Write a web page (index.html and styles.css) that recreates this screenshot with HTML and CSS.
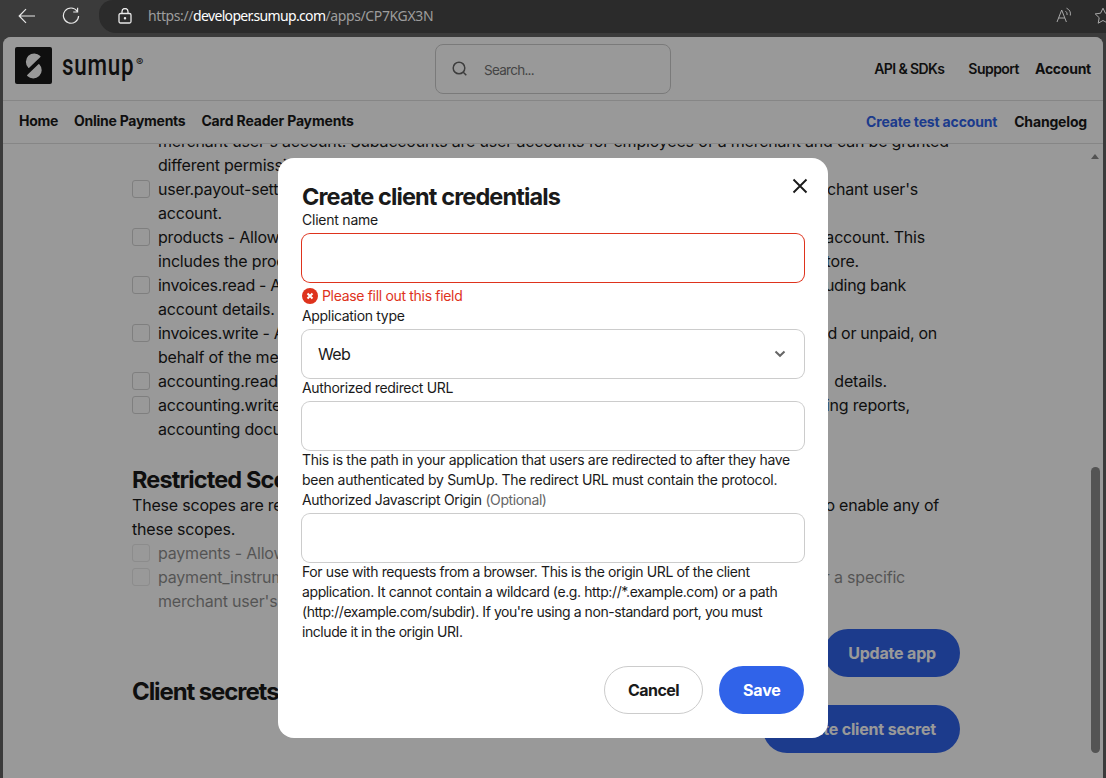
FILE: index.html
```
<!DOCTYPE html>
<html lang="en">
<head>
<meta charset="utf-8">
<title>SumUp Developer</title>
<link rel="stylesheet" href="styles.css">
</head>
<body>
<div class="browser">
  <div class="toolbar">
    <svg class="tool back" viewBox="0 0 18 16"><path d="M17 8H1.5M8 1.2L1.2 8L8 14.8"/></svg>
    <svg class="tool reload" viewBox="0 0 18 18"><path d="M15.2 4.2A7.6 7.6 0 1 0 16.6 9M15.6 .8V5H11.2"/></svg>
    <div class="address">
      <svg class="lock" viewBox="0 0 14 16"><rect x="1" y="5.5" width="12" height="9.5" rx="1.5"/><path d="M4 5.5V3.5a3 3 0 0 1 6 0V5.5"/><circle cx="7" cy="10.2" r=".6"/></svg>
      <div class="url"><span class="scheme">https://</span><span class="host">developer.sumup.com</span><span class="path">/apps/CP7KGX3N</span></div>
      <svg class="aloud" viewBox="0 0 17 16"><path d="M1 15L5.7 3L10.400 15M2.600 11H8.800M9.500 4.200q2 1.200 1.600 3.800M10.500 1.200q4.800 2.200 3.800 7.300"/></svg>
      <svg class="star" viewBox="0 0 18 18"><path d="M9 1.2l2.4 5 5.4.7-4 3.8 1 5.5L9 13.5l-4.8 2.7 1-5.5-4-3.8 5.4-.7z"/></svg>
    </div>
  </div>

  <div class="page">
    <header class="top">
      <div class="logo">
        <svg class="mark" viewBox="0 0 37 37"><rect width="37" height="37" rx="2" class="mark-bg"/><path class="mark-fg" d="M25.300 8.900A8.200 8.200 0 0 0 13.300 20.700Q13.700 21.200 14.200 20.700L25.400 9.900Q25.800 9.400 25.300 8.900zM12.300 29A8.200 8.200 0 0 0 24.300 17.200Q23.900 16.700 23.400 17.200L12.200 28Q11.800 28.500 12.300 29z"/></svg>
        <span class="wordmark">sumup</span>
        <span class="reg">®</span>
      </div>
      <div class="search">
        <svg viewBox="0 0 16 16"><circle cx="7" cy="7" r="5.8"/><path d="M11.300 11.300L14.300 14.300"/></svg>
        <span>Search...</span>
      </div>
      <nav class="top-links"><a class="api">API &amp; SDKs</a><a class="support">Support</a><a class="acct">Account</a></nav>
    </header>
    <nav class="sub">
      <a class="home">Home</a><a class="online">Online Payments</a><a class="reader">Card Reader Payments</a>
      <a class="create">Create test account</a><a>Changelog</a>
    </nav>

    <main class="content">
      <div class="scope first">
        <p class="lead">merchant user's account. Subaccounts are user accounts for employees of a merchant and can be granted</p>
        <p>different permissions.</p>
      </div>
      <div class="scope"><i class="box"></i>
        <p class="w760"><span>user.payout-settings</span><span>merchant user's</span></p><p>account.</p></div>
      <div class="scope"><i class="box"></i>
        <p class="w767"><span>products - Allows</span><span>account. This</span></p><p class="w701"><span>includes the products</span><span>store.</span></p></div>
      <div class="scope"><i class="box"></i>
        <p class="w748 tight"><span>invoices.read - Allows</span><span>including bank</span></p><p>account details.</p></div>
      <div class="scope"><i class="box"></i>
        <p class="w779 tight"><span>invoices.write - Allows</span><span>paid or unpaid, on</span></p><p>behalf of the merchant</p></div>
      <div class="scope"><i class="box"></i>
        <p class="w729"><span>accounting.read</span><span>details.</span></p></div>
      <div class="scope"><i class="box"></i>
        <p class="w752"><span>accounting.write</span><span>accounting reports,</span></p><p>accounting documents.</p></div>

      <h2 class="restricted">Restricted Scopes</h2>
      <p class="w807"><span>These scopes are restricted</span><span>to enable any of</span></p>
      <p>these scopes.</p>
      <div class="scope off"><i class="box"></i><p>payments - Allows</p></div>
      <div class="scope off"><i class="box"></i>
        <p class="w747"><span>payment_instruments</span><span>for a specific</span></p><p>merchant user's</p></div>
      <div class="actions"><button class="btn primary">Update app</button></div>
      <div class="secrets"><h2>Client secrets</h2><button class="btn primary">Create client secret</button></div>
    </main>

    <div class="scrollbar"><i class="arrow"></i><i class="thumb"></i></div>
    <div class="overlay"></div>
  </div>
</div>

<section class="modal" role="dialog">
  <svg class="close" viewBox="0 0 16 16"><path d="M1.500 1.500L14.500 14.500M14.500 1.500L1.500 14.500"/></svg>
  <h2>Create client credentials</h2>
  <label class="l1">Client name</label>
  <div class="field invalid"></div>
  <div class="error"><svg viewBox="0 0 16 16"><circle cx="8" cy="8" r="8"/><path d="M5.500 5.500L10.500 10.500M10.500 5.500L5.500 10.500"/></svg><span>Please fill out this field</span></div>
  <label>Application type</label>
  <div class="field select"><span>Web</span><svg viewBox="0 0 12 8"><path d="M1.500 1.500L6 5.800L10.500 1.500"/></svg></div>
  <label>Authorized redirect URL</label>
  <div class="field"></div>
  <p class="h1">This is the path in your application that users are redirected to after they have</p>
  <p class="h1">been authenticated by SumUp. The redirect URL must contain the protocol.</p>
  <label>Authorized Javascript Origin <span class="optional">(Optional)</span></label>
  <div class="field"></div>
  <p class="h2">For use with requests from a browser. This is the origin URL of the client</p>
  <p class="h2">application. It cannot contain a wildcard (e.g. http://*.example.com) or a path</p>
  <p class="h3">(http://example.com/subdir). If you're using a non-standard port, you must</p>
  <p class="h3">include it in the origin URI.</p>
  <div class="buttons"><button class="btn secondary">Cancel</button><button class="btn primary save">Save</button></div>
</section>
</body>
</html>
```
FILE: styles.css
```
* { box-sizing: border-box; }
body { margin: 0; width: 1106px; height: 778px; overflow: hidden; position: relative; color: #1a1a1a; font: 16px/24px Inter, sans-serif; letter-spacing: -0.2px; }
h2, p { margin: 0; white-space: nowrap; }
h2 { font-size: 23.5px; line-height: 28px; padding-top: 1px; height: 28px; font-weight: 700; letter-spacing: -0.88px; }
svg { fill: none; stroke: currentColor; flex: none; }

.browser { height: 778px; background: #3b3b3b; padding: 0 3px; display: flex; flex-direction: column; }
.toolbar { height: 37px; flex: none; display: flex; color: #e8e8e8; margin-right: -3px; }
.tool { stroke-width: 1.2; }
.back { width: 18px; height: 16px; margin: 8px 0 0 15px; }
.reload { width: 18px; height: 18px; margin: 7px 0 0 26px; }
.address { flex: 1; height: 33px; margin-left: 19px; background: #2b2b2b; border-radius: 14px 0 0 17px; display: flex; padding-left: 19px; overflow: hidden; }
.lock { width: 14px; height: 16px; margin-top: 8px; stroke-width: 1.3; }
.url { margin-left: 16px; font: 14px/32px "Noto Sans", sans-serif; color: #9d9d9d; white-space: nowrap; flex: 1; }
.scheme { letter-spacing: -0.4px; }
.host { color: #fff; letter-spacing: -0.66px; }
.path { letter-spacing: -0.37px; }
.aloud { width: 17px; height: 16px; margin: 7px 21px 0 0; color: #a8a8a8; }
.star { width: 18px; height: 18px; margin: 7px -6px 0 0; color: #a8a8a8; }

.page { position: relative; flex: 1; min-height: 0; background: #fff; border-radius: 8px 8px 0 0; overflow: hidden; display: flex; flex-direction: column; }
.top { height: 64px; flex: none; border-bottom: 1px solid #e0e0e0; display: flex; padding: 0 12px; }
.logo { display: flex; width: 420px; padding-top: 10px; }
.mark { width: 37px; height: 37px; margin-left: .4px; }
.mark-bg { fill: #1a1a1a; stroke: none; }
.mark-fg { fill: #fff; stroke: none; }
.wordmark { font: 500 29.500px/36px Roboto, sans-serif; letter-spacing: 1px; transform: scaleX(.76); transform-origin: 0 0; width: 76px; margin-left: 9.500px; }
.reg { font-size: 11px; line-height: 30px; letter-spacing: 0; margin-left: -2px; font-weight: 500; }
.search { width: 236px; height: 50px; margin-top: 7px; border: 1px solid #ccc; border-radius: 8px; display: flex; padding: 0 16px; align-items: center; }
.search svg { width: 16px; height: 16px; color: #666; stroke-width: 1.5; }
.search span { margin: 2px 0 0 16px; font-size: 13.500px; color: #737373; letter-spacing: -0.73px; }
.top-links { margin-left: auto; display: flex; font-size: 14px; font-weight: 600; line-height: 64px; white-space: nowrap; }
.api { letter-spacing: -0.6px; margin-right: 24px; }
.support { letter-spacing: -0.54px; margin-right: 16px; }
.acct { letter-spacing: -0.25px; font-weight: 700; }
.sub { height: 43px; flex: none; border-bottom: 1px solid #e0e0e0; display: flex; padding: 0 16px; font-size: 14px; font-weight: 700; line-height: 40px; white-space: nowrap; letter-spacing: -0.17px; }
.sub a { margin-right: 16px; }
.sub a:last-child { margin-right: 0; }
.sub .home, .sub .online { letter-spacing: -0.27px; }
.sub .create { margin-left: auto; color: #3063e9; margin-right: 17px; }
.sub .create, .sub .create + a { line-height: 42px; }

.content { flex: 1; min-height: 0; overflow: hidden; padding-left: 129px; width: 957px; }
.scope { position: relative; padding-left: 26px; }
.first { margin-top: -15px; }
.lead { letter-spacing: -0.182px; }
.scope p { min-height: 24px; }
.box { position: absolute; left: 0; top: 3px; width: 18px; height: 18px; border: 1px solid #d4d4d4; border-radius: 3px; }
.content p { display: flex; justify-content: space-between; }
.tight { letter-spacing: -0.3px; }
.w701 { width: 701px; } .w729 { width: 729px; } .w747 { width: 747px; } .w748 { width: 748px; }
.w752 { width: 752px; } .w760 { width: 760px; } .w767 { width: 767px; } .w779 { width: 779px; } .w807 { width: 807px; }
.restricted { margin-top: 24px; }
.off { opacity: .5; }
.actions { display: flex; justify-content: flex-end; margin-top: 16px; }
.secrets { display: flex; justify-content: space-between; }
.secrets h2 { font-size: 24px; letter-spacing: -1.1px; }
.secrets .btn { margin-top: 28px; }

.btn { height: 48px; border: 0; border-radius: 24px; padding: 0 24px; font: 700 16px/46px Inter, sans-serif; letter-spacing: -0.18px; white-space: nowrap; }
.primary { background: #3063e9; color: #fff; }
.secondary { background: #fff; border: 1px solid #ccc; color: #1a1a1a; padding: 0 23px; letter-spacing: -0.56px; }
.save { width: 85px; }

.scrollbar { position: absolute; right: 3px; top: 115px; width: 9px; bottom: 25px; display: flex; flex-direction: column; justify-content: space-between; }
.arrow { border: 4.500px solid transparent; border-top: 0; border-bottom: 5px solid #8a8a8a; margin-top: 2px; width: 0; }
.thumb { height: 286px; border-radius: 5px; background: #8c8c8c; }
.overlay { position: absolute; inset: 0; background: rgba(0, 0, 0, .4); }

.modal { position: absolute; left: 278px; top: 158px; width: 550px; height: 580px; padding: 24px; background: #fff; border-radius: 16px; display: flex; flex-direction: column; font-size: 14px; line-height: 20px; letter-spacing: -0.32px; }
.modal .close { position: absolute; left: 514px; top: 20px; width: 16px; height: 16px; stroke-width: 1.900; }
.modal label { display: block; height: 20px; margin-bottom: 4px; }
.modal .l1 { letter-spacing: -0.23px; }
.field { height: 48px; flex: none; border-radius: 8px; box-shadow: 0 0 0 1px #ccc; }
.invalid { box-shadow: 0 0 0 1px #de331d; }
.error { display: flex; align-items: center; gap: 4px; height: 20px; margin-top: 4px; color: #de331d; }
.error svg { width: 16px; height: 16px; fill: #de331d; stroke: none; }
.error path { stroke: #fff; stroke-width: 2; }
.select { display: flex; align-items: center; justify-content: space-between; padding: 0 18px 0 16px; font-size: 16px; letter-spacing: -0.65px; }
.select svg { width: 12px; height: 8px; color: #666; stroke-width: 2; }
.optional { color: #666; letter-spacing: -0.43px; }
.h1 { letter-spacing: -0.298px; }
.h2 { letter-spacing: -0.39px; }
.h3 { letter-spacing: -0.435px; }
.buttons { display: flex; justify-content: flex-end; gap: 16px; margin-top: 24px; }
```
